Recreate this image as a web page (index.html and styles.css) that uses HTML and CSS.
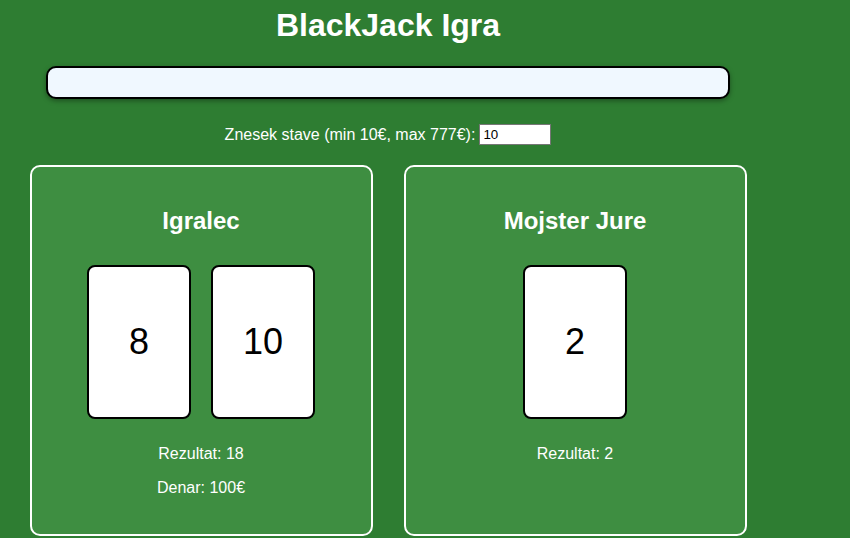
FILE: index.html
```html
<!DOCTYPE html>
<html lang="sl">
<head>
<meta charset="utf-8">
<title>BlackJack Igra</title>
<link rel="stylesheet" href="styles.css">
</head>
<body>
<div class="page">
  <h1 class="title">BlackJack Igra</h1>
  <div class="message"></div>
  <div class="bet">
    <label for="bet">Znesek stave (min 10€, max 777€):</label>
    <input id="bet" class="bet-input" type="text" value="10">
  </div>
  <div class="table">
    <section class="panel">
      <h2 class="panel-title">Igralec</h2>
      <div class="cards">
        <div class="card">8</div>
        <div class="card">10</div>
      </div>
      <p class="info">Rezultat: 18</p>
      <p class="info">Denar: 100€</p>
    </section>
    <section class="panel">
      <h2 class="panel-title">Mojster Jure</h2>
      <div class="cards">
        <div class="card">2</div>
      </div>
      <p class="info">Rezultat: 2</p>
    </section>
  </div>
</div>
</body>
</html>
```

FILE: styles.css
```css
html, body {
  margin: 0;
  padding: 0;
}
body {
  background: #2e7d32;
  color: #fff;
  font-family: "Liberation Sans", Arial, sans-serif;
  font-size: 16px;
  overflow: hidden;
}
.page {
  width: 760px;
  margin-left: 8px;
  text-align: center;
}
.title {
  font-size: 32px;
  font-weight: bold;
  margin: 7px 0 22px;
}
.message {
  box-sizing: border-box;
  width: 90%;
  height: 33px;
  margin: 0 auto;
  background: #f0f8ff;
  border: 2px solid #000;
  border-radius: 10px;
  box-shadow: 0 2px 5px rgba(0, 0, 0, 0.35);
}
.bet {
  margin-top: 25px;
  height: 21px;
  display: flex;
  justify-content: center;
  align-items: center;
  gap: 4px;
}
.bet-input {
  box-sizing: border-box;
  width: 72px;
  height: 21px;
  font-family: "Liberation Sans", Arial, sans-serif;
  font-size: 13.33px;
  color: #000;
  background: #fff;
  border: 1px solid #767676;
  padding: 2px 3px;
  margin: 0;
}
.table {
  margin-top: 20px;
  display: flex;
  justify-content: center;
  gap: 31px;
}
.panel {
  box-sizing: border-box;
  width: 343px;
  padding: 20px 20px 21px;
  background: #3e8e41;
  border: 2px solid #fff;
  border-radius: 10px;
}
.panel-title {
  font-size: 24px;
  font-weight: bold;
  margin: 20px 0;
}
.cards {
  display: flex;
  justify-content: center;
}
.card {
  width: 100px;
  height: 150px;
  margin: 10px;
  background: #fff;
  color: #000;
  border: 2px solid #000;
  border-radius: 8px;
  display: flex;
  align-items: center;
  justify-content: center;
  font-size: 36px;
}
.info {
  margin: 16px 0;
}
```
